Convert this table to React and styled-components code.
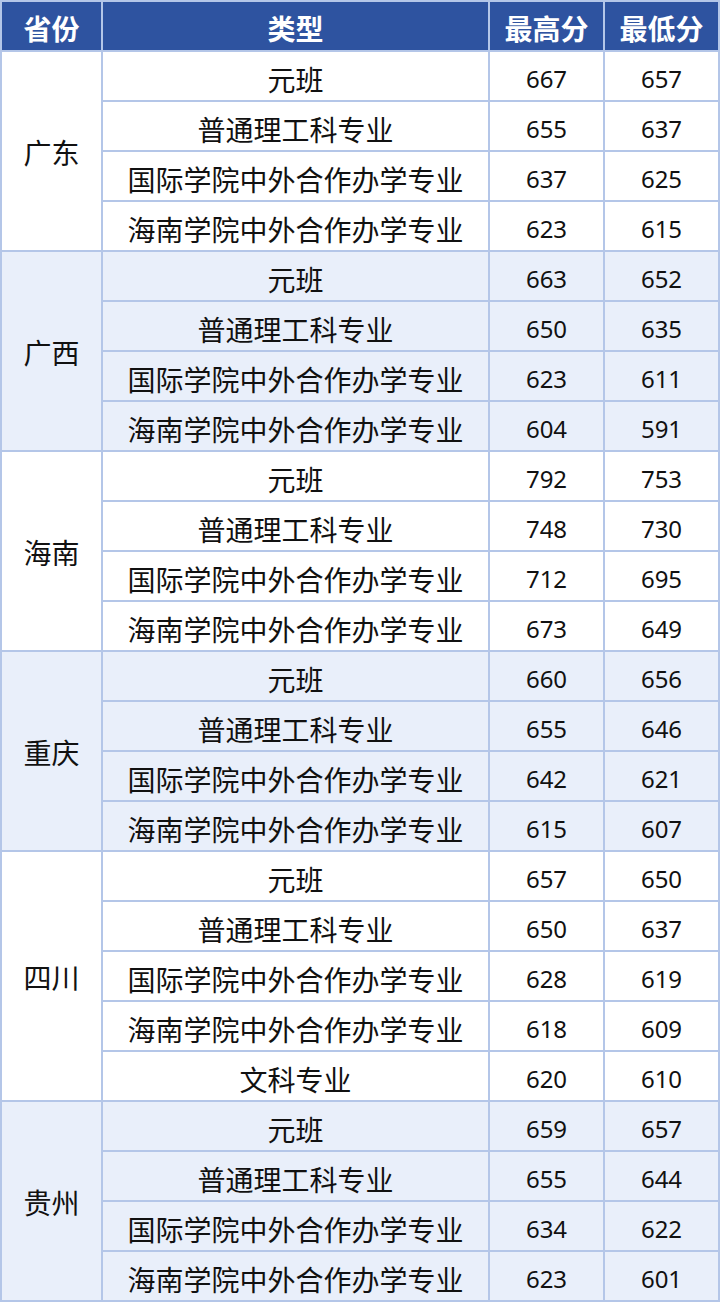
import React from "react";
import styled, { createGlobalStyle } from "styled-components";

const Global = createGlobalStyle`
  html, body { margin: 0; padding: 0; background: #ffffff; }
  body { font-family: "Noto Sans CJK SC", "Noto Sans", sans-serif; }
`;

const data = [
  { prov: "广东", rows: [["元班", 667, 657], ["普通理工科专业", 655, 637], ["国际学院中外合作办学专业", 637, 625], ["海南学院中外合作办学专业", 623, 615]] },
  { prov: "广西", rows: [["元班", 663, 652], ["普通理工科专业", 650, 635], ["国际学院中外合作办学专业", 623, 611], ["海南学院中外合作办学专业", 604, 591]] },
  { prov: "海南", rows: [["元班", 792, 753], ["普通理工科专业", 748, 730], ["国际学院中外合作办学专业", 712, 695], ["海南学院中外合作办学专业", 673, 649]] },
  { prov: "重庆", rows: [["元班", 660, 656], ["普通理工科专业", 655, 646], ["国际学院中外合作办学专业", 642, 621], ["海南学院中外合作办学专业", 615, 607]] },
  { prov: "四川", rows: [["元班", 657, 650], ["普通理工科专业", 650, 637], ["国际学院中外合作办学专业", 628, 619], ["海南学院中外合作办学专业", 618, 609], ["文科专业", 620, 610]] },
  { prov: "贵州", rows: [["元班", 659, 657], ["普通理工科专业", 655, 644], ["国际学院中外合作办学专业", 634, 622], ["海南学院中外合作办学专业", 623, 601]] },
];

const Table = styled.div`
  display: grid;
  grid-template-columns: 99px 385px 113px 113px;
  grid-auto-rows: 48px;
  gap: 2px;
  padding: 2px;
  width: 720px;
  box-sizing: border-box;
  background: #b4c6e8;
`;

const HeadCell = styled.div`
  display: flex;
  align-items: center;
  justify-content: center;
  padding-top: 4px;
  box-sizing: border-box;
  background: #2e53a0;
  color: #ffffff;
  font-family: "Noto Sans CJK SC", sans-serif;
  font-weight: 700;
  font-size: 28px;
`;

const Cell = styled.div`
  display: flex;
  align-items: center;
  justify-content: center;
  padding-top: 6px;
  box-sizing: border-box;
  background: ${(p) => (p.$alt ? "#e9effa" : "#ffffff")};
  color: #111111;
  font-family: "Noto Sans CJK SC", sans-serif;
  font-size: 28px;
  white-space: nowrap;
`;

const ProvCell = styled(Cell)`
  grid-row: span ${(p) => p.$span};
  padding-top: 2px;
`;

const NumCell = styled(Cell)`
  font-family: "Noto Sans", sans-serif;
  font-size: 24px;
  padding-top: 4px;
`;

export default function App() {
  return (
    <>
      <Global />
      <Table>
        <HeadCell>省份</HeadCell>
        <HeadCell>类型</HeadCell>
        <HeadCell>最高分</HeadCell>
        <HeadCell>最低分</HeadCell>
        {data.map((g, gi) => {
          const alt = gi % 2 === 1;
          return (
            <React.Fragment key={g.prov}>
              <ProvCell $alt={alt} $span={g.rows.length} style={{ gridColumn: 1 }}>
                {g.prov}
              </ProvCell>
              {g.rows.map((r, ri) => (
                <React.Fragment key={ri}>
                  <Cell $alt={alt} style={{ gridColumn: 2 }}>{r[0]}</Cell>
                  <NumCell $alt={alt}>{r[1]}</NumCell>
                  <NumCell $alt={alt}>{r[2]}</NumCell>
                </React.Fragment>
              ))}
            </React.Fragment>
          );
        })}
      </Table>
    </>
  );
}
